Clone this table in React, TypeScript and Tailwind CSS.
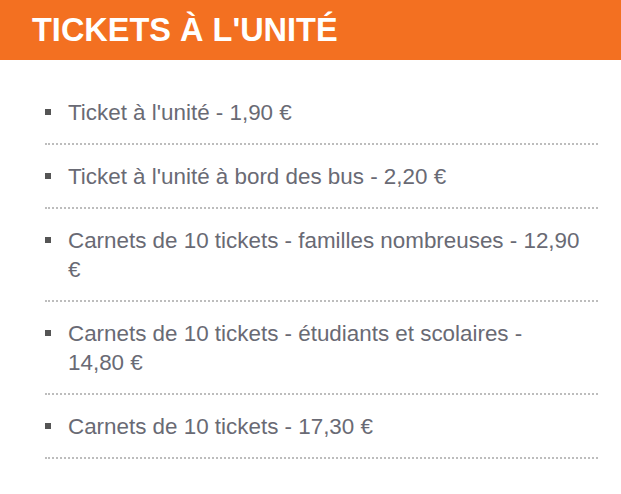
const tarifs = [
	"Ticket à l'unité - 1,90 €",
	"Ticket à l'unité à bord des bus - 2,20 €",
	"Carnets de 10 tickets - familles nombreuses - 12,90 €",
	"Carnets de 10 tickets - étudiants et scolaires - 14,80\u00a0€",
	"Carnets de 10 tickets - 17,30 €",
];

export default function App() {
	return (
		<div className="min-h-screen w-full bg-white font-['Liberation_Sans',Arial,sans-serif]">
			<h1 className="h-[60px] bg-[#f37021] pl-8 text-[32.5px] leading-[60px] font-bold text-white">
				TICKETS À L'UNITÉ
			</h1>

			<ul className="mt-[21px] ml-[45px] w-[553px]">
				{tarifs.map((tarif) => (
					<li
						key={tarif}
						className="flex border-b-2 border-dotted border-[#bdbdbd] pt-[17px] pb-4"
					>
						<span className="mt-[11px] mr-[17px] h-[6px] w-[6px] shrink-0 bg-[#555555]" />
						<span className="text-[22.4px] leading-[29px] text-[#696a74]">{tarif}</span>
					</li>
				))}
			</ul>
		</div>
	);
}
